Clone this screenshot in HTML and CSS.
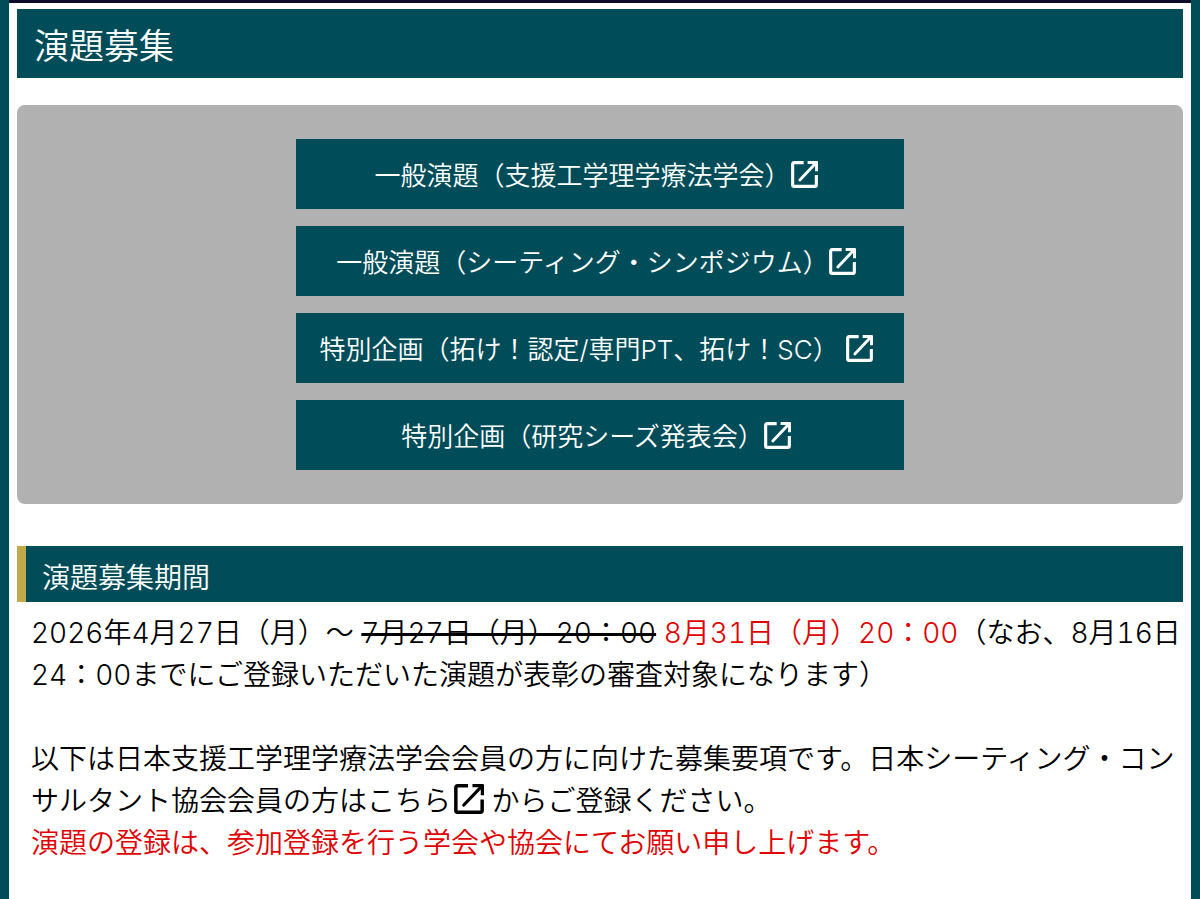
FILE: index.html
```html
<!DOCTYPE html>
<html lang="ja">
<head>
<meta charset="utf-8">
<meta name="viewport" content="width=device-width, initial-scale=1">
<title>演題募集</title>
<link rel="stylesheet" href="styles.css">
</head>
<body>
<svg class="sprite" aria-hidden="true">
  <symbol id="external" viewBox="0 0 26 26">
    <path d="M12.2 1.6H3Q1.6 1.6 1.6 3V23Q1.6 24.4 3 24.4H23Q24.4 24.4 24.4 23V13.5" fill="none" stroke="currentColor" stroke-width="3"/>
    <path d="M8.5 18.2L23.3 2.7" fill="none" stroke="currentColor" stroke-width="2.8" stroke-linecap="round"/>
    <path d="M16 0H25Q26 0 26 1V9.8H23.2V4.6L21.3 2.8H16Z" fill="currentColor"/>
  </symbol>
</svg>
<main class="page">
  <h1 class="page-title">演題募集</h1>
  <nav class="links" aria-label="演題募集">
    <a class="button" href="#general-pt">一般演題（支援工学理学療法学会）<svg class="icon"><use href="#external"/></svg></a>
    <a class="button" href="#general-seating">一般演題（シーティング・シンポジウム）<svg class="icon"><use href="#external"/></svg></a>
    <a class="button" href="#special-pt">特別企画（拓け！認定/専門PT、拓け！SC）&nbsp;<svg class="icon"><use href="#external"/></svg></a>
    <a class="button" href="#special-seeds">特別企画（研究シーズ発表会）<svg class="icon"><use href="#external"/></svg></a>
  </nav>
  <section>
    <h2 class="section-title">演題募集期間</h2>
    <div class="body-text">
      <p>2026年4月27日（月）〜 <s>7月27日（月）20：00</s> <span class="notice">8月31日（月）20：00</span>（なお、8月16日24：00までにご登録いただいた演題が表彰の審査対象になります）</p>
      <p>以下は日本支援工学理学療法学会会員の方に向けた募集要項です。日本シーティング・コンサルタント協会会員の方は<a class="text-link" href="#register">こちら<svg class="icon icon-inline"><use href="#external"/></svg></a> からご登録ください。<br><span class="notice">演題の登録は、参加登録を行う学会や協会にてお願い申し上げます。</span></p>
    </div>
  </section>
</main>
</body>
</html>
```
FILE: styles.css
```css
* {
  box-sizing: border-box;
}

body {
  margin: 0;
  background: #004d59;
  color: #000;
  font-family: Inter, "Noto Sans CJK JP", sans-serif;
  font-weight: 350;
  font-variant-numeric: tabular-nums;
}

.sprite {
  display: none;
}

.page {
  min-height: 100vh;
  margin: 0 9px;
  padding: 6px 8px;
  border-top: 3px solid #0c0c28;
  background: #fff;
}

.page-title {
  margin: 0 0 27px;
  padding: 13px 17px 7px;
  background: #004d59;
  color: #fff;
  font-size: 35px;
  font-weight: 350;
  line-height: 49px;
}

.links {
  display: flex;
  flex-direction: column;
  align-items: center;
  gap: 17px;
  margin-bottom: 42px;
  padding: 34px 16px;
  border-radius: 8px;
  background: #b1b1b1;
}

.button {
  display: flex;
  align-items: center;
  justify-content: center;
  width: 100%;
  max-width: 608px;
  min-height: 70px;
  padding-top: 4px;
  background: #004d59;
  color: #fff;
  font-size: 26px;
  line-height: 38px;
  text-decoration: none;
}

.icon {
  flex: none;
  width: 27px;
  height: 27px;
  margin: 0 8px 4px 0;
}

.section-title {
  margin: 0 0 10px;
  padding: 12px 16px 4px;
  border-left: 9px solid #c0a94b;
  background: #004d59;
  color: #fff;
  font-size: 28px;
  font-weight: 350;
  line-height: 40px;
}

.body-text {
  padding: 0 2px 0 14px;
  font-size: 28px;
  line-height: 42px;
}

.body-text p {
  margin: 0 0 42px;
}

.body-text s {
  text-decoration-thickness: 3px;
}

.notice {
  color: #e00000;
}

.text-link {
  color: inherit;
  text-decoration: none;
}

.icon-inline {
  width: 30px;
  height: 30px;
  margin: 0 0 0 3px;
  vertical-align: -3px;
}
```
